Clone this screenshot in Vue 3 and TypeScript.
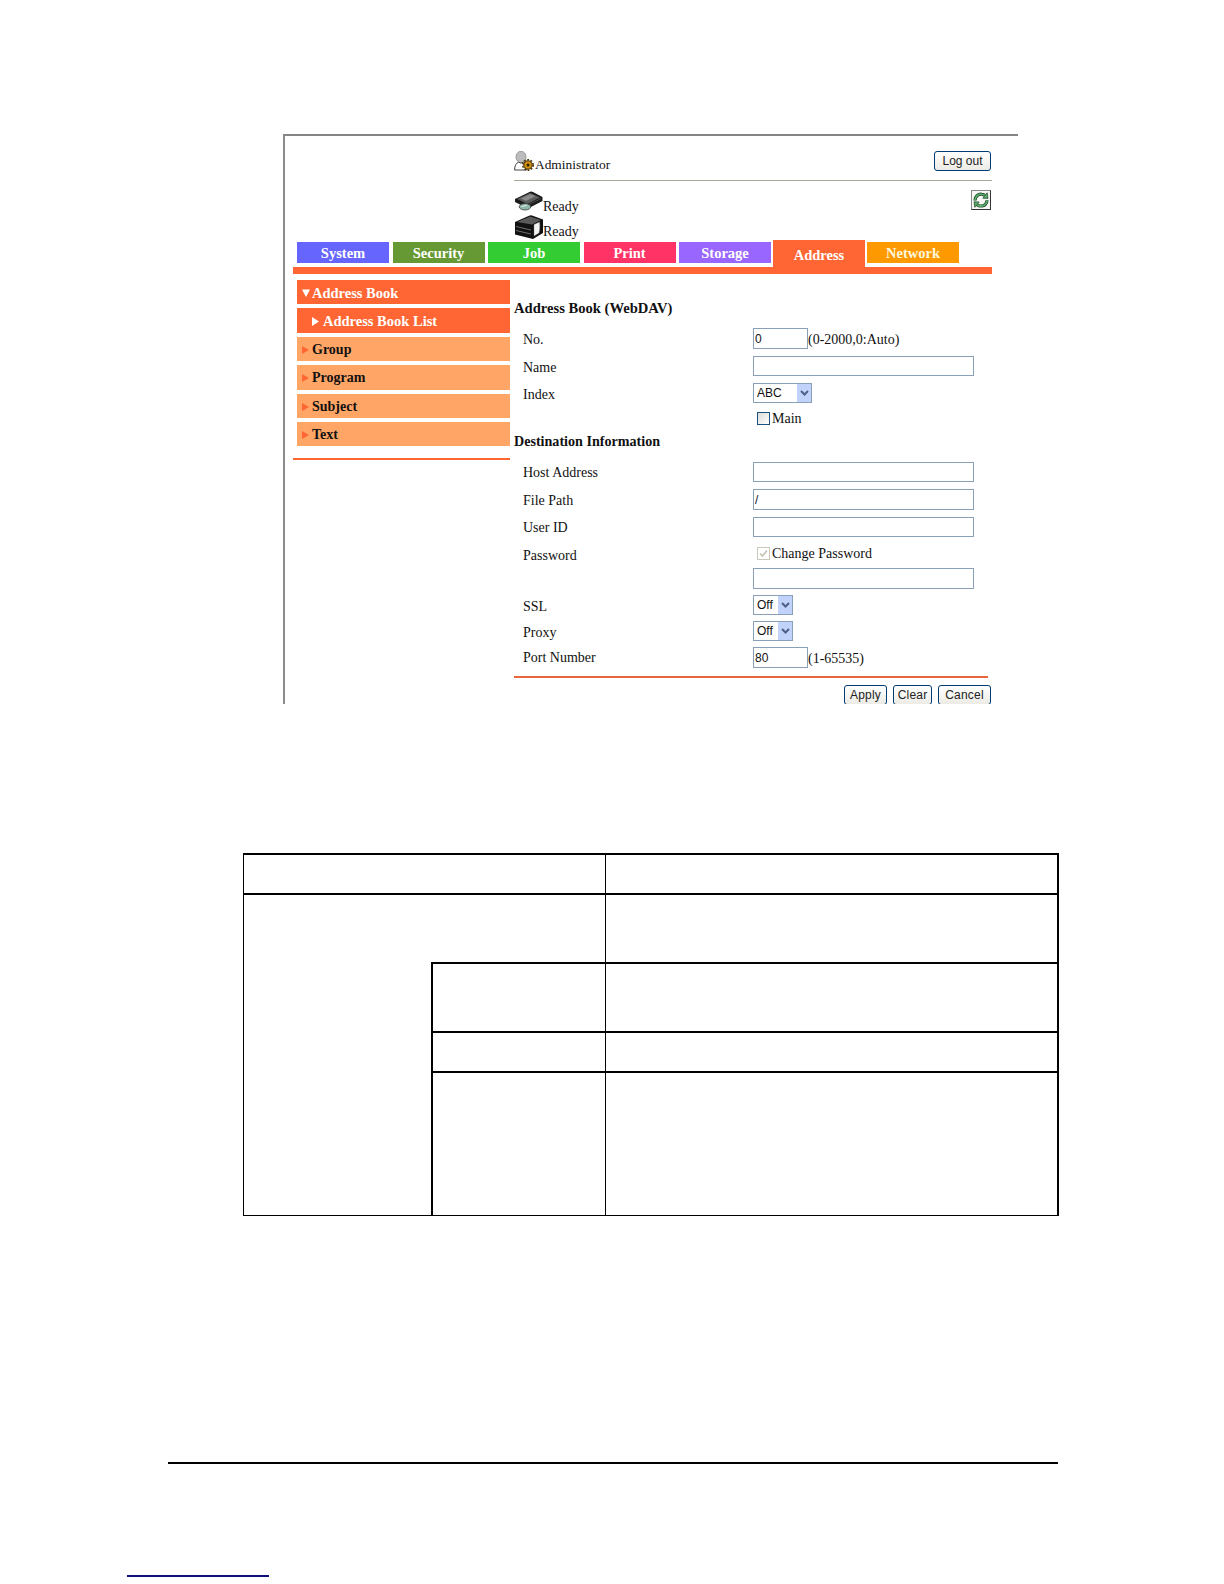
<script setup lang="ts">
interface Tab { name: string; color: string; active?: boolean }
const tabs: Tab[] = [
  { name: 'System', color: '#6666ff' },
  { name: 'Security', color: '#669933' },
  { name: 'Job', color: '#33cc33' },
  { name: 'Print', color: '#ff3366' },
  { name: 'Storage', color: '#9966ff' },
  { name: 'Address', color: '#ff6633', active: true },
  { name: 'Network', color: '#ff9900' },
]
const subItems: string[] = ['Group', 'Program', 'Subject', 'Text']
</script>

<template>
  <div class="page">
    <section class="frame">
      <header class="head">
        <div class="admin-row">
          <div class="admin">
            <svg class="admin-icon" width="20" height="20" viewBox="0 0 20 20">
              <ellipse cx="7" cy="6" rx="5" ry="5.800" fill="#bcbcbc" stroke="#808080" stroke-width=".7" />
              <path d="M.6 19c0-4.500 1.600-7 4-7.800l2.400 1 2.400-1c1.600.5 2.600 1.500 3 3v4.800z" fill="#fff" stroke="#444" stroke-width="1" />
              <circle cx="14" cy="14" r="4.200" fill="#d2920f" stroke="#3a2a05" stroke-width="1" />
              <circle cx="14" cy="14" r="5.200" fill="none" stroke="#4a3406" stroke-width="1.600" stroke-dasharray="1.800 1.500" />
              <circle cx="14" cy="14" r="1.500" fill="#2e2104" />
            </svg>
            <span class="admin-text">Administrator</span>
          </div>
          <button class="btn logout" type="button">Log out</button>
        </div>
        <div class="status-area">
          <div class="status-list">
            <div class="status one">
              <svg width="28" height="20" viewBox="0 0 28 20">
                <path d="M0 8 14 1.200Q16 0 18 1l9.500 5v4L13 17.500 0 11z" fill="#1b1b1b" />
                <path d="M2 8 15 2l10 4.500L12.500 13z" fill="#5c5c5c" />
                <path d="M6 7.500 15.500 3l5 2.300L11 10z" fill="#8a8a8a" />
                <path d="M14 13.500 26 7.500" stroke="#555" stroke-width=".8" />
                <ellipse cx="10" cy="15.800" rx="5.800" ry="3.200" fill="#8fb8ab" stroke="#2a2a2a" stroke-width=".7" />
                <path d="M6.500 15.500 12 14.200" stroke="#e4f1ec" stroke-width="1" />
              </svg>
              <span>Ready</span>
            </div>
            <div class="status two">
              <svg width="28" height="24" viewBox="0 0 28 24">
                <path d="M0 7 14 .8Q15.500 0 17 .5L28 4.500V18L18 24 0 19.500z" fill="#111" />
                <path d="M2 7 15 1.600 26 5l-9 4.500z" fill="#5a5a5a" />
                <path d="M1 11.500l15 3.500M1 15.500l15 3.500" stroke="#6d6d6d" stroke-width="1" />
                <path d="M19 9.500 24.500 7c.6 4 .3 8-.5 11l-5 3z" fill="#f4f4f4" stroke="#777" stroke-width=".4" />
              </svg>
              <span>Ready</span>
            </div>
          </div>
          <div class="refresh">
            <svg width="18" height="18" viewBox="0 0 18 18">
              <path d="M3 9.500C3 5.500 6 3 9.500 3.200c1.500 0 2.600.6 3.400 1.300" fill="none" stroke="#1f3f28" stroke-width="3.200" />
              <path d="M3 9.500C3 5.500 6 3 9.500 3.200c1.500 0 2.600.6 3.400 1.300" fill="none" stroke="#58ad68" stroke-width="1.800" />
              <path d="M10.800 7.200 16 7.400 15.200 1.800z" fill="#58ad68" stroke="#1f3f28" stroke-width=".7" />
              <path d="M15 9.200c0 4-3 6-6.500 5.800-1.500 0-2.600-.6-3.400-1.300" fill="none" stroke="#1f3f28" stroke-width="3.200" />
              <path d="M15 9.200c0 4-3 6-6.500 5.800-1.500 0-2.600-.6-3.400-1.300" fill="none" stroke="#58ad68" stroke-width="1.800" />
              <path d="M7.200 11 2 10.800l.8 5.500z" fill="#58ad68" stroke="#1f3f28" stroke-width=".7" />
            </svg>
          </div>
        </div>
      </header>

      <nav class="tabs">
        <div
          v-for="t in tabs"
          :key="t.name"
          class="tab"
          :class="{ active: t.active }"
          :style="{ backgroundColor: t.color }"
        >{{ t.name }}</div>
      </nav>
      <div class="bar"></div>

      <div class="body">
        <aside class="side">
          <div class="item on">
            <svg class="arrow" width="8" height="8" viewBox="0 0 8 8"><path d="M0 .5h8L4 8z" fill="#fff" /></svg>
            <span>Address Book</span>
          </div>
          <div class="item on sub">
            <svg class="arrow" width="7" height="9" viewBox="0 0 7 9"><path d="M0 0l7 4.500-7 4.500z" fill="#fff" /></svg>
            <span>Address Book List</span>
          </div>
          <div v-for="s in subItems" :key="s" class="item off">
            <svg class="arrow" width="7" height="8" viewBox="0 0 7 8"><path d="M0 0l7 4-7 4z" fill="#ff6633" /></svg>
            <span>{{ s }}</span>
          </div>
          <div class="side-rule"></div>
        </aside>

        <main class="main">
          <h2 class="h first">Address Book (WebDAV)</h2>
          <div class="row h28"><label class="nudge">No.</label><div class="ctl"><input class="in short tall" value="0" /><span class="note low">(0-2000,0:Auto)</span></div></div>
          <div class="row h27"><label class="nudge">Name</label><div class="ctl"><input class="in long" /></div></div>
          <div class="row h27"><label class="nudge">Index</label><div class="ctl">
            <div class="sel wide"><select><option>ABC</option></select><span class="drop"><svg width="9" height="6" viewBox="0 0 9 6"><path d="M1 1l3.500 3.500L8 1" fill="none" stroke="#4d6185" stroke-width="2" /></svg></span></div>
          </div></div>
          <div class="row h20"><span></span><div class="ctl chk"><span class="box"></span><span>Main</span></div></div>
          <h2 class="h second">Destination Information</h2>
          <div class="row h27"><label>Host Address</label><div class="ctl"><input class="in long" /></div></div>
          <div class="row h28"><label class="nudge">File Path</label><div class="ctl"><input class="in long tall" value="/" /></div></div>
          <div class="row h28"><label>User ID</label><div class="ctl"><input class="in long" /></div></div>
          <div class="row h23"><label>Password</label><div class="ctl chk"><span class="box checked"><svg width="9" height="9" viewBox="0 0 9 9"><path d="M1 4.500l2.500 2.500L8 1.500" fill="none" stroke="#c4c2b4" stroke-width="1.600" /></svg></span><span>Change Password</span></div></div>
          <div class="row h27"><span></span><div class="ctl"><input class="in long tall" /></div></div>
          <div class="row h26"><label class="nudge">SSL</label><div class="ctl">
            <div class="sel"><select><option>Off</option></select><span class="drop"><svg width="9" height="6" viewBox="0 0 9 6"><path d="M1 1l3.500 3.500L8 1" fill="none" stroke="#4d6185" stroke-width="2" /></svg></span></div>
          </div></div>
          <div class="row h26"><label class="nudge">Proxy</label><div class="ctl">
            <div class="sel"><select><option>Off</option></select><span class="drop"><svg width="9" height="6" viewBox="0 0 9 6"><path d="M1 1l3.500 3.500L8 1" fill="none" stroke="#4d6185" stroke-width="2" /></svg></span></div>
          </div></div>
          <div class="row h29"><label>Port Number</label><div class="ctl"><input class="in short tall" value="80" /><span class="note">(1-65535)</span></div></div>
          <div class="rule"></div>
          <div class="actions">
            <button class="btn apply" type="button">Apply</button>
            <button class="btn clear" type="button">Clear</button>
            <button class="btn cancel" type="button">Cancel</button>
          </div>
        </main>
      </div>
    </section>

    <div class="grid">
      <div class="cell a1"></div>
      <div class="cell c3 r1"></div>
      <div class="cell a2"></div>
      <div class="cell b2"></div>
      <div class="cell c3 r2"></div>
      <div class="cell c2 r3"></div>
      <div class="cell c3 r3"></div>
      <div class="cell c2 r4"></div>
      <div class="cell c3 r4"></div>
      <div class="cell c2 r5 last"></div>
      <div class="cell c3 r5 last"></div>
    </div>

    <div class="foot-rule"></div>
    <div class="foot-link"></div>
  </div>
</template>

<style>
html, body { margin: 0; background: #fff; }
</style>

<style scoped>
.page {
  width: 1224px;
  height: 1584px;
  box-sizing: border-box;
  padding-top: 134px;
  overflow: hidden;
  background: #fff;
  font-family: "Liberation Serif", "Times New Roman", serif;
  font-size: 14px;
  color: #111;
}
.frame {
  margin-left: 283px;
  width: 735px;
  height: 570px;
  box-sizing: border-box;
  border-top: 2px solid #858585;
  border-left: 2px solid #8c8c8c;
  overflow: hidden;
}
.head { margin-left: 229px; width: 478px; }
.admin-row {
  height: 44px;
  border-bottom: 1px solid #aca899;
  display: flex;
  justify-content: space-between;
  align-items: flex-start;
  padding-right: 1px;
  box-sizing: content-box;
  width: 477px;
}
.admin { display: flex; align-items: flex-end; height: 37px; }
.admin-icon { margin: 0 1px 2px 0; display: block; }
.admin-text { font-size: 13.4px; line-height: 14px; margin-bottom: 1px; }
.btn {
  font-family: "Liberation Sans", Arial, sans-serif;
  font-size: 12px;
  color: #222;
  letter-spacing: .2px;
  padding: 0;
  height: 20px;
  box-sizing: border-box;
  border: 1px solid #003c74;
  border-radius: 3px;
  background: linear-gradient(#ffffff, #ecebe5);
}
.logout { width: 57px; margin-top: 15px; letter-spacing: 0; }
.status-area {
  height: 59px;
  display: flex;
  justify-content: space-between;
  align-items: flex-start;
  box-sizing: border-box;
  padding: 10px 1px 0 1px;
}
.status-list { display: flex; flex-direction: column; }
.status { display: flex; align-items: flex-end; line-height: 14px; }
.status svg { display: block; align-self: flex-start; flex: none; }
.status.one { height: 24px; }
.status.one span { margin-bottom: 1px; }
.status.two { height: 25px; }
.status.two span { margin-bottom: 1px; }
.refresh {
  width: 20px;
  height: 20px;
  box-sizing: border-box;
  border: 1px solid #888;
  border-right-color: #333;
  border-bottom-color: #333;
  background: #f8f8f5;
  display: flex;
  align-items: center;
  justify-content: center;
  margin-top: -1px;
}
.tabs {
  margin-left: 12px;
  height: 27px;
  display: flex;
  gap: 3.5px;
  align-items: flex-start;
}
.tab {
  width: 92px;
  height: 21px;
  margin-top: 2px;
  color: #fff;
  font-weight: 700;
  font-size: 14.5px;
  line-height: 23px;
  text-align: center;
}
.tab.active {
  height: 27px;
  margin: 0 -1.5px;
  line-height: 31px;
}
.tab:last-child { color: #fff8dd; }
.bar { margin-left: 8px; width: 699px; height: 7px; background: #ff6633; }
.body { display: flex; align-items: flex-start; }
.side { margin-left: 8px; width: 217px; padding-top: 6px; }
.item {
  margin: 0 0 4px 4px;
  height: 24.4px;
  box-sizing: border-box;
  padding-top: 2px;
  display: flex;
  align-items: center;
  padding-left: 5px;
  font-weight: 700;
  font-size: 14.5px;
}
.item .arrow { margin-right: 2px; flex: none; }
.item.on { background: #ff6633; color: #fff; }
.item.off { background: #ffa566; color: #111; font-size: 14px; }
.item.off .arrow { margin-right: 3px; }
.item.sub { padding-left: 15px; }
.item.sub .arrow { margin-right: 4px; }
.side-rule { margin-top: 12px; height: 2px; background: #ff6633; }
.main { margin-left: 4px; width: 478px; }
.h { margin: 0; font-size: 14.6px; font-weight: 700; line-height: 22px; }
.h.first { padding-top: 23px; height: 31px; }
.h.second { height: 22px; margin-bottom: 10px; font-size: 14.1px; }
.row { display: grid; grid-template-columns: 239px 1fr; align-items: start; }
.row label { padding-left: 9px; line-height: 22px; }
.row label.nudge { padding-top: 1px; }
.h20 { height: 20px; }
.h23 { height: 23px; }
.h26 { height: 26px; }
.h27 { height: 27px; }
.h28 { height: 28px; }
.h29 { height: 29px; }
.ctl { display: flex; align-items: center; }
.ctl.chk { padding: 2px 0 0 4px; line-height: 13px; }
.in {
  box-sizing: border-box;
  border: 1px solid #8a9fb8;
  height: 20px;
  padding: 0 1px;
  margin: 0;
  font-family: "Liberation Sans", Arial, sans-serif;
  font-size: 12px;
  color: #111;
  background: #fff;
  outline: none;
}
.tall { height: 21px; }
.short { width: 55px; }
.long { width: 221px; }
.note { padding-top: 2px; }
.note.low { padding-top: 3px; }
.box {
  width: 13px;
  height: 13px;
  box-sizing: border-box;
  border: 1px solid #1c5180;
  background: linear-gradient(135deg, #dcdcd7, #fff);
  margin-right: 2px;
  flex: none;
  display: flex;
  align-items: center;
  justify-content: center;
}
.box.checked { border-color: #cac8bb; background: #fff; }
.sel {
  position: relative;
  width: 40px;
  height: 20px;
  box-sizing: border-box;
  border: 1px solid #8a9fb8;
  background: #fff;
}
.sel.wide { width: 59px; }
.sel select {
  appearance: none;
  -webkit-appearance: none;
  display: block;
  width: 100%;
  height: 100%;
  border: 0;
  padding: 0 0 0 3px;
  background: transparent;
  font-family: "Liberation Sans", Arial, sans-serif;
  font-size: 12px;
  color: #111;
}
.drop {
  position: absolute;
  top: 0;
  right: 0;
  bottom: 0;
  width: 14px;
  background: #c1d3fb;
  display: flex;
  align-items: center;
  justify-content: center;
}
.rule { width: 474px; height: 2px; background: #e8673a; }
.actions {
  margin-top: 7px;
  display: flex;
  justify-content: flex-end;
  gap: 6px;
  width: 477px;
}
.apply { width: 43px; }
.clear { width: 39px; }
.cancel { width: 53px; }

.grid {
  margin: 149px 0 0 243px;
  width: 816px;
  box-sizing: border-box;
  border-top: 2px solid #000;
  border-left: 1px solid #000;
  display: grid;
  grid-template-columns: 187px 174px 454px;
  grid-template-rows: 40px 69px 69px 40px 143px;
}
.cell { box-sizing: border-box; border-bottom: 2px solid #000; }
.cell.last { border-bottom-width: 1px; }
.a1 { grid-column: 1 / span 2; grid-row: 1; }
.a2 { grid-column: 1; grid-row: 2 / span 4; border-bottom-width: 1px; }
.b2 { grid-column: 2; grid-row: 2; }
.c2 { grid-column: 2; border-left: 2px solid #000; }
.c3 { grid-column: 3; border-left: 1px solid #000; border-right: 2px solid #000; }
.r1 { grid-row: 1; }
.r2 { grid-row: 2; }
.r3 { grid-row: 3; }
.r4 { grid-row: 4; }
.r5 { grid-row: 5; }
.foot-rule { margin: 246px 0 0 168px; width: 890px; height: 2px; background: #000; }
.foot-link { margin: 111px 0 0 127px; width: 142px; height: 2px; background: #10107a; }
</style>
